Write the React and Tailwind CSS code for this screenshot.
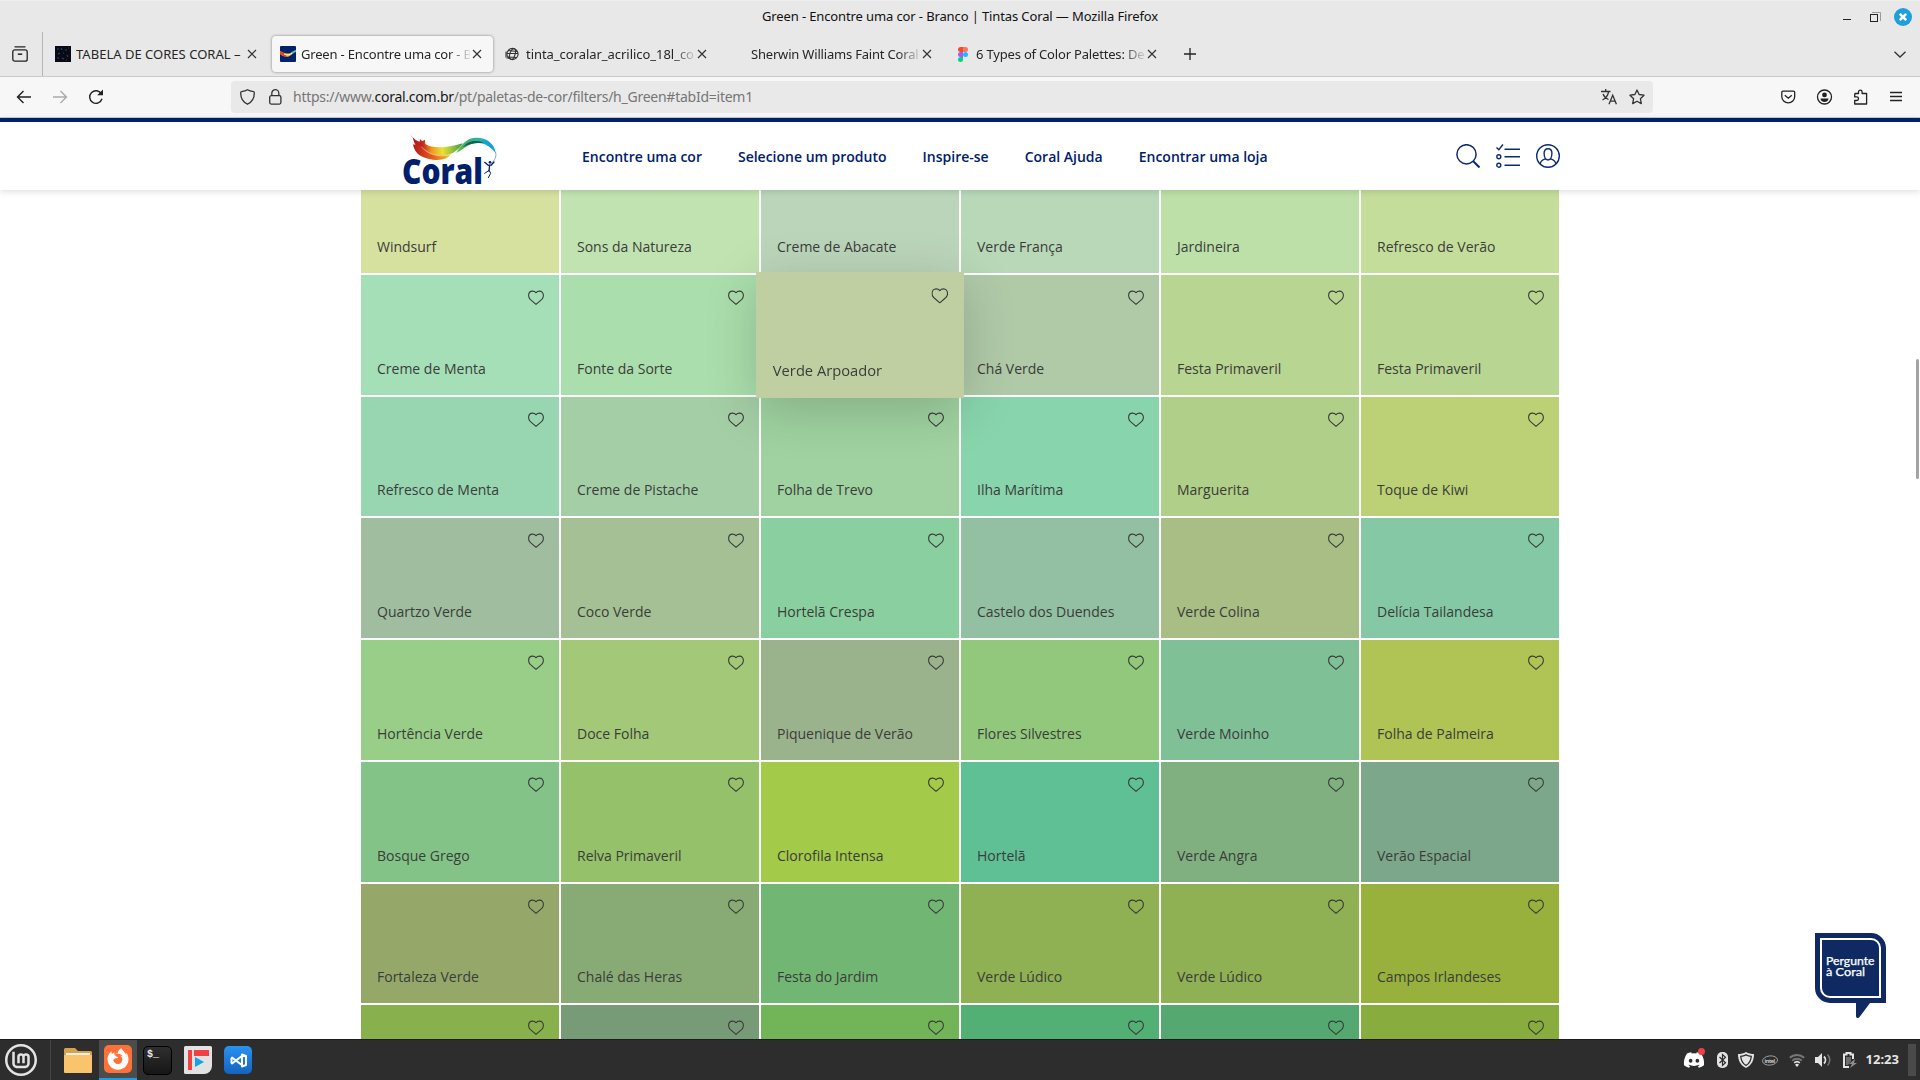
import React from "react";
import { FaFirefoxBrowser, FaDiscord } from "react-icons/fa";
import { SiLinuxmint } from "react-icons/si";

const ui = "font-['Noto_Sans',sans-serif]";

const swatches = [
  ["Windsurf", "#d6e09f"], ["Sons da Natureza", "#c1e2b1"], ["Creme de Abacate", "#bbd5ba"], ["Verde França", "#b8d8b8"], ["Jardineira", "#bce0a8"], ["Refresco de Verão", "#c5dd9b"],
  ["Creme de Menta", "#a5dfb7"], ["Fonte da Sorte", "#aadeac"], ["Verde Arpoador", "#bfcfa2", true], ["Chá Verde", "#b0caa8"], ["Festa Primaveril", "#b8d592"], ["Festa Primaveril", "#b8d592"],
  ["Refresco de Menta", "#97d6b1"], ["Creme de Pistache", "#a4cea6"], ["Folha de Trevo", "#9fd2a0"], ["Ilha Marítima", "#88d4ad"], ["Marguerita", "#b0cf88"], ["Toque de Kiwi", "#bcd175"],
  ["Quartzo Verde", "#a0bda0"], ["Coco Verde", "#a4c094"], ["Hortelã Crespa", "#8acf9f"], ["Castelo dos Duendes", "#93bfa2"], ["Verde Colina", "#a8be84"], ["Delícia Tailandesa", "#84c8a5"],
  ["Hortência Verde", "#98ce88"], ["Doce Folha", "#a3c878"], ["Piquenique de Verão", "#9bb38c"], ["Flores Silvestres", "#92c87c"], ["Verde Moinho", "#80c096"], ["Folha de Palmeira", "#b0c355"],
  ["Bosque Grego", "#84c388"], ["Relva Primaveril", "#95c16a"], ["Clorofila Intensa", "#a3ca48"], ["Hortelã", "#5fc096"], ["Verde Angra", "#80b080"], ["Verão Espacial", "#7ca78a"],
  ["Fortaleza Verde", "#95a869"], ["Chalé das Heras", "#88ab75"], ["Festa do Jardim", "#72b673"], ["Verde Lúdico", "#8fb053"], ["Verde Lúdico", "#8fb053"], ["Campos Irlandeses", "#98b03c"],
  ["", "#88b14e"], ["", "#779b76"], ["", "#72b559"], ["", "#52b074"], ["", "#54a870"], ["", "#88ad3e"],
];

const Heart = () => (
  <svg className="h-[15px] w-4" viewBox="0 -0.4 16 15" fill="none" stroke="#3a3d3a" strokeWidth="1.1" strokeLinejoin="round">
    <path d="M8 14 2.200 8.900C.9 7.600.6 6.400.6 5.200.6 2.600 2.300.700 4.500.700 6 .7 7.300 1.300 8 2.300 8.700 1.300 10 .7 11.500.7c2.200 0 3.900 1.900 3.900 4.500 0 1.200-.3 2.400-1.600 3.700Z" />
  </svg>
);

function Swatch({ name, color, raised, first }) {
  return (
    <div
      className={
        "flex min-h-0 flex-col justify-between pr-[15px] pb-4 pl-4 pt-[15px] " +
        (raised ? "relative z-10 scale-105 shadow-[0_10px_50px_rgba(0,0,0,0.18)]" : "")
      }
      style={{ backgroundColor: color }}
    >
      <div className="flex justify-end">{first ? null : <Heart />}</div>
      {name && (
        <p className="font-['Open_Sans',sans-serif] text-[14px] leading-[21px] whitespace-nowrap text-[#3a3d3a]">{name}</p>
      )}
    </div>
  );
}

const CloseX = () => (
  <svg className="size-[10px] shrink-0" viewBox="0 0 10 10" stroke="#333" strokeWidth="1.2" fill="none">
    <path d="M1 1l8 8M9 1 1 9" />
  </svg>
);

const TabelaIcon = () => (
  <svg className="size-4 shrink-0" viewBox="0 0 16 16">
    <rect width="16" height="16" fill="#080b14" />
    <path d="M2 3h2M6 2l1 2M10 4h2M3 8l2-1M8 7h1M12 9l1 2M2 12h2M7 12l2 1M11 14h1M13 2h1" stroke="#27466e" strokeWidth="1.1" />
  </svg>
);

const CoralIcon = () => (
  <svg className="size-4 shrink-0" viewBox="0 0 16 16">
    <rect width="16" height="16" rx="1" fill="#00246b" />
    <path d="M0 5C2 6 5 7.800 8 7.600c3-.2 5-2.600 8-3.400v1.600c-3 1-5 4.200-8 5C5 11 2 9.500 0 8Z" fill="#f6b81e" />
    <path d="M0 5 4 7l3 3.800C4 10.800 1 9.500 0 8Z" fill="#e8481f" />
    <path d="M11 6.400c2-1.300 3.500-2 5-2.200v1.600c-1.500.3-3 1.300-4.500 2.700Z" fill="#58b7c9" />
    <path d="M4 8c3 1.500 6 1 8-.8" stroke="#fff4ba" fill="none" />
  </svg>
);

const GlobeIcon = () => (
  <svg className="h-[14px] w-4 shrink-0" viewBox="0 0 16 14" fill="none" stroke="#333" strokeWidth="1.1">
    <circle cx="7.500" cy="7" r="5.600" />
    <ellipse cx="7.500" cy="7" rx="2.600" ry="5.600" transform="rotate(18 7.500 7)" />
    <path d="M2 6.500h11M3 3.500l9 1M2.800 10l9 .5M1 4.500v6M1.500 11h3" />
  </svg>
);

const FigmaIcon = () => (
  <svg className="h-[15px] w-4 shrink-0" viewBox="0 0 16 15">
    <path d="M8 0H5.500a2.500 2.500 0 0 0 0 5H8Z" fill="#f24e1e" />
    <path d="M8 0h2.500a2.500 2.500 0 0 1 0 5H8Z" fill="#ff7262" />
    <path d="M8 5H5.500a2.500 2.500 0 0 0 0 5H8Z" fill="#a259ff" />
    <circle cx="10.500" cy="7.500" r="2.500" fill="#1abcfe" />
    <path d="M8 10H5.500A2.500 2.500 0 1 0 8 12.500Z" fill="#0acf83" />
  </svg>
);

function Tab({ icon, title, active, fade = true, track }) {
  return (
    <div
      className={
        "flex h-9 w-[221px] shrink-0 items-center rounded pl-2 pr-[11px] " +
        (active ? "bg-[#f7f7f7] shadow-[0_0_3px_rgba(0,0,0,0.45)]" : "")
      }
    >
      {icon}
      <div
        className={
          "ml-[5px] min-w-0 flex-1 overflow-hidden text-[13px] leading-5 whitespace-nowrap text-[#262626] " + track + " " +
          (fade ? "[mask-image:linear-gradient(to_right,#000_calc(100%-22px),rgba(0,0,0,0.1))]" : "")
        }
      >
        {title}
      </div>
      <div className="ml-[2px] flex">
        <CloseX />
      </div>
    </div>
  );
}

function BrowserChrome() {
  return (
    <div className={"flex h-[118px] shrink-0 flex-col bg-[#e8e8e8] " + ui}>
      <div className="grid h-8 grid-cols-[1fr_auto_1fr] items-center border-t border-[#efefef]">
        <span />
        <span className="text-[13px] tracking-[-0.12px] text-[#111]">Green - Encontre uma cor - Branco | Tintas Coral — Mozilla Firefox</span>
        <div className="flex items-center justify-end pr-2">
          <svg className="h-[18px] w-[70px]" viewBox="0 0 70 18">
            <path d="M1 11.500h8" stroke="#222" />
            <path d="M30 4.500h8.500V13" stroke="#999" fill="none" />
            <rect x="28.500" y="6.500" width="7" height="7" stroke="#222" fill="none" />
            <circle cx="61" cy="9" r="9" fill="#1f9ede" />
            <path d="m57.800 5.800 6.400 6.400m0-6.400-6.400 6.400" stroke="#fff" strokeWidth="2.500" />
          </svg>
        </div>
      </div>
      <div className="flex h-11 items-center">
        <div className="flex h-full w-[43px] items-center border-r border-[#b5b5b5] pl-3">
          <svg className="size-4" viewBox="0 0 16 16" fill="none" stroke="#222" strokeWidth="1.300">
            <path d="M3 .8h10" strokeLinecap="round" />
            <rect x=".8" y="3.800" width="14.400" height="11.400" rx="2" />
            <path d="M5.800 8.200h4.400" strokeWidth="1.500" />
          </svg>
        </div>
        <div className="ml-1 flex gap-1">
          <Tab icon={<TabelaIcon />} title="TABELA DE CORES CORAL –" fade={false} track="tracking-[0.02px]" />
          <Tab active icon={<CoralIcon />} title="Green - Encontre uma cor - B" track="tracking-[-0.18px]" />
          <Tab icon={<GlobeIcon />} title="tinta_coralar_acrilico_18l_co" track="tracking-[-0.04px]" />
          <Tab icon={<span className="w-4 shrink-0" />} title="Sherwin Williams Faint Coral" track="tracking-[-0.19px]" />
          <Tab icon={<FigmaIcon />} title="6 Types of Color Palettes: De" track="tracking-[-0.18px]" />
        </div>
        <svg className="ml-4 size-3" viewBox="0 0 12 12" stroke="#222" strokeWidth="1.300">
          <path d="M6 0v12M0 6h12" />
        </svg>
        <svg className="mr-[14px] ml-auto h-[7px] w-3" viewBox="0 0 12 7" stroke="#333" strokeWidth="1.300" fill="none">
          <path d="m.5.800 5.500 5.200L11.500.800" />
        </svg>
      </div>
      <div className="flex h-[42px] items-center border-y border-[#c8c8c8] bg-[#f7f7f7] text-[#222]">
        <svg className="ml-4 h-4 w-[90px]" viewBox="0 0 90 16" fill="none" stroke="#222" strokeWidth="1.400">
          <path d="M15 8H1.500M7.500 2 1.500 8l6 6" />
          <path d="M37 8h13.500M44.500 2l6 6-6 6" stroke="#aaa" />
          <path d="M85.500 5A6.300 6.300 0 1 0 86 9.800" />
          <path d="M87 .5v5.800h-5.800Z" fill="#222" stroke="none" />
        </svg>
        <div className="ml-[125px] flex h-8 w-[1422px] items-center rounded bg-[#e9e9e9] pr-2 pl-[9px]">
          <svg className="h-4 w-[42px]" viewBox="0 0 42 16" fill="none" stroke="#333" strokeWidth="1.300">
            <path d="M7.500.8c2 1.200 4 1.600 6 1.900.8.1.8.6.8 1.300 0 5-2 9-6.800 11.200C2.700 13 .7 9 .7 4c0-.7 0-1.200.8-1.300 2-.3 4-.7 6-1.900Z" />
            <rect x="29.700" y="6.700" width="11.200" height="8.400" rx="1.500" />
            <path d="M31.800 6.500V4.200a3.500 3.500 0 0 1 7 0v2.300" />
          </svg>
          <span className="ml-[11px] pb-[2px] text-[14px] tracking-[-0.25px] text-[#767676]">
            https://www.<span className="text-[#161616]">coral.com.br</span>/pt/paletas-de-cor/filters/h_Green#tabId=item1
          </span>
          <svg className="ml-auto h-4 w-11" viewBox="0 0 44 16" fill="none" stroke="#333" strokeWidth="1.300">
            <path d="M0 2.500h9.500M4.700 0v2.500M1.500 11C4.500 9.500 7 6.500 7.600 2.700M2 5c1 2.500 3 4.500 5.500 5.500M8 15.200l3.700-9 3.700 9M9.200 12.200h5" />
            <path d="m36 1 2.100 4.500 4.900.7-3.600 3.500.9 4.900-4.300-2.400-4.300 2.400.9-4.900L29 6.200l4.900-.7Z" strokeLinejoin="round" />
          </svg>
        </div>
        <svg className="ml-[128px] h-4 w-[122px]" viewBox="0 0 122 16" fill="none" stroke="#222" strokeWidth="1.300">
          <path d="M2 2.200h10.500a1.200 1.200 0 0 1 1.200 1.200V7.500a6.400 6.400 0 0 1-12.900 0V3.400A1.200 1.200 0 0 1 2 2.200ZM3.800 6.200l3.500 3 3.500-3" />
          <circle cx="43.500" cy="8" r="7" />
          <circle cx="43.500" cy="5.900" r="2.400" fill="#222" stroke="none" />
          <path d="M39.500 9.500h8c0 2-1.800 3.500-4 3.500s-4-1.500-4-3.500Z" fill="#222" stroke="none" />
          <path d="M74 4.500h3.500V3a1.800 1.800 0 0 1 3.600 0v1.500h4.500V15H73.700v-3.500h2a1.800 1.800 0 0 0 0-3.600h-2V6Z" strokeLinejoin="round" />
          <path d="M109 3.500h12M109 7.500h12M109 11.500h12" />
        </svg>
      </div>
    </div>
  );
}

const CoralLogo = () => (
  <svg className="h-[54px] w-[98px]" viewBox="0 0 294 162">
    <defs>
      <linearGradient id="warm" x1="0" x2="1">
        <stop offset="0" stopColor="#a8151c" />
        <stop offset=".25" stopColor="#c3281b" />
        <stop offset=".42" stopColor="#ee9a1e" />
        <stop offset=".62" stopColor="#ecdf35" />
        <stop offset=".82" stopColor="#8fc13f" />
        <stop offset="1" stopColor="#3a9a48" />
      </linearGradient>
      <linearGradient id="cool" x1="0" x2="1">
        <stop offset="0" stopColor="#6fb544" />
        <stop offset=".3" stopColor="#3fae6a" />
        <stop offset=".6" stopColor="#25b5b0" />
        <stop offset="1" stopColor="#0a8fd8" />
      </linearGradient>
      <linearGradient id="under" x1="0" x2="1">
        <stop offset="0" stopColor="#b5161c" />
        <stop offset=".55" stopColor="#e8641c" />
        <stop offset="1" stopColor="#f5c826" />
      </linearGradient>
    </defs>
    <path d="M25 5l10 8 9 8 11 5 4-8 4 7 9-5 1 13c20 13 60 14 112-2-10 20-40 42-76 42-38-1-64-25-71-50l-4-12Z" fill="url(#warm)" />
    <path d="M36 34c5 30 28 42 60 46 26 3 46-3 54-17-40 10-72 0-92-24Z" fill="url(#under)" />
    <path d="M164 60c14-14 22-38 52-45 30-5 62 8 68 46-14-20-34-34-62-30-24 3-34 20-58 29Z" fill="url(#cool)" />
    <path d="M186 42c10-12 24-20 42-18 10 1 16 3 22 7-24-3-42 0-64 11Z" fill="#0b5f55" />
    <path d="M250 22c18 6 30 18 34 39-7-12-16-20-28-25Z" fill="#12a3dc" />
    <path d="M284 58c3 13-3 25-14 34" fill="none" stroke="#5b7ea8" strokeWidth="2" />
    <path d="M62 42c28 30 68 34 108 14" fill="none" stroke="#fff" strokeWidth="2" opacity=".75" />
    <text x="3" y="152" textLength="243" lengthAdjust="spacingAndGlyphs" fontFamily="Open Sans, sans-serif" fontWeight="800" fontSize="104" fill="#00206b">Coral</text>
    <circle cx="267" cy="88" r="4" fill="#00206b" />
    <path d="M251 88l11 9 9-1 8-9M266 96l-2 18" fill="none" stroke="#00206b" strokeWidth="4" strokeLinecap="round" strokeLinejoin="round" />
    <path d="M263 113l-12 8M265 113l4 8-7 13" fill="none" stroke="#00206b" strokeWidth="3" strokeLinecap="round" strokeLinejoin="round" />
  </svg>
);

function SiteHeader() {
  return (
    <header className="relative z-20 flex h-[72px] shrink-0 items-center border-t-4 border-[#00206b] bg-white shadow-[0_2px_6px_rgba(0,0,0,0.12)]">
      <div className="mx-auto flex w-[1200px] items-center">
        <div className="mt-2 ml-[41px]">
          <CoralLogo />
        </div>
        <nav className="ml-[83px] flex gap-9 font-['Open_Sans',sans-serif] text-[14px] font-semibold text-[#00206b]">
          <a>Encontre uma cor</a>
          <a>Selecione um produto</a>
          <a>Inspire-se</a>
          <a>Coral Ajuda</a>
          <a>Encontrar uma loja</a>
        </nav>
        <div className="ml-auto flex gap-4">
          <svg className="size-6" viewBox="0 0 24 24" fill="none" stroke="#0c2a72" strokeWidth="1.500">
            <circle cx="10.500" cy="10.300" r="9.600" />
            <path d="m17 17 6.500 6.500" strokeWidth="2" />
          </svg>
          <svg className="size-6" viewBox="0 0 24 24" fill="none" stroke="#0c2a72" strokeWidth="1.400">
            <path d="m.5 3.500 2.300 2.300L7 .5" />
            <path d="M8.500 5.200H24M8.500 12.800H24M8.500 21.200H24" />
            <circle cx="2.800" cy="12.800" r="2" />
            <circle cx="2.800" cy="21.200" r="2" />
          </svg>
          <svg className="size-6" viewBox="0 0 24 24" fill="none" stroke="#0c2a72" strokeWidth="1.400">
            <circle cx="12" cy="12" r="11.300" />
            <path d="M12 4.800c2.500 0 3.900 1.700 3.900 4.300 0 3-1.200 6.900-3.900 6.900s-3.900-3.900-3.900-6.900c0-2.600 1.400-4.300 3.900-4.300ZM9.500 14.800c-2.500.9-5 1.200-5.200 5.200M14.500 14.800c2.500.9 5 1.200 5.200 5.200" />
          </svg>
        </div>
      </div>
    </header>
  );
}

const ChatBubble = () => (
  <svg className="absolute top-[742px] right-[34px] h-[86px] w-[71px]" viewBox="0 0 71 86">
    <path d="M0 1h56a15 15 0 0 1 15 15v55H55L44.500 85c-1 1.500-3.500 1.500-3.500-1V71H15A15 15 0 0 1 0 56Z" fill="#0f2a63" />
    <path d="M6 7h50a9 9 0 0 1 9 9v49H15a9 9 0 0 1-9-9Z" fill="none" stroke="#fff" strokeWidth="2" />
    <g fill="#fff" stroke="#fff" strokeWidth=".25" fontFamily="Lato, sans-serif" fontSize="10.500">
      <text x="11" y="32.500" textLength="48.500" lengthAdjust="spacingAndGlyphs">Pergunte</text>
      <text x="11" y="44" textLength="39" lengthAdjust="spacingAndGlyphs">à Coral</text>
    </g>
  </svg>
);

function Taskbar() {
  return (
    <footer className="flex h-[41px] shrink-0 items-center border-t border-[#1c1c1c] bg-[#2d2d2d]">
      <div className="flex h-10 w-[51px] items-center border-r border-[#444] pl-[5px]">
        <SiLinuxmint className="size-8 text-[#e4e4e4]" />
      </div>
      <svg className="ml-[13px] h-[25px] w-7" viewBox="0 0 28 25">
        <path d="M0 1.500A1.500 1.500 0 0 1 1.500 0H11l3 3h12.500A1.500 1.500 0 0 1 28 4.500V12H0Z" fill="#d9a24a" />
        <rect x="2" y="5" width="24" height="4" fill="#f0f0f0" />
        <rect y="7" width="28" height="18" rx="1" fill="#f9c46b" />
      </svg>
      <div className="ml-[7px] flex h-full w-[38px] items-center justify-center border-b-2 border-[#1f9ede] bg-[#4c4c4c]">
        <div className="flex size-7 items-center justify-center rounded-[5px] bg-[#ff7139]">
          <FaFirefoxBrowser className="size-[22px] text-white" />
        </div>
      </div>
      <div className="ml-[6px] flex size-[29px] rounded-[5px] border border-black bg-gradient-to-b from-[#2f2f2f] to-[#161616] pl-[3px] pt-[1px]">
        <span className="font-['Liberation_Mono',monospace] text-[10px] font-bold leading-[13px] text-[#eee]">$_</span>
      </div>
      <svg className="ml-3 size-7" viewBox="0 0 28 28">
        <path d="M1.500 0h25A1.500 1.500 0 0 1 28 1.500V20a8 8 0 0 1-8 8H1.500A1.500 1.500 0 0 1 0 26.500v-25A1.500 1.500 0 0 1 1.500 0Z" fill="#e2e2e2" />
        <path d="M4 4h4v20H4ZM10 4h15v6H10Z" fill="#f04242" />
        <path d="m11 11 9 5-9 5Z" fill="#12a5df" />
      </svg>
      <div className="ml-3 flex size-7 items-center justify-center rounded-[5px] bg-gradient-to-b from-[#2a92ef] to-[#1464c0]">
        <svg className="h-[15px] w-[17px]" viewBox="0 0 17 15" fill="none" stroke="#fff" strokeWidth="2" strokeLinejoin="round">
          <path d="M12.500 2.500 2 10.500M2 4.500l10.500 8" strokeLinecap="round" />
          <path d="M1.500 5v5.500M12 1.500l4 1.500v9l-4 1.500Z" />
        </svg>
      </div>
      <div className="ml-auto flex items-center text-[#e4e4e4]">
        <div className="relative mr-3">
          <FaDiscord className="size-[22px] text-white" />
          <span className="absolute -top-px right-0 size-[7px] rounded-full bg-[#f23f43]" />
        </div>
        <svg className="mr-[10px] h-4 w-[11px]" viewBox="0 0 11 16">
          <rect width="11" height="16" rx="5" fill="#e4e4e4" />
          <path d="m2.500 5 6 5.800-3 2.700v-11l3 2.700-6 5.800" fill="none" stroke="#2d2d2d" strokeWidth="1.200" />
        </svg>
        <svg className="mr-2 size-4" viewBox="0 0 16 16">
          <path d="M8 0c2.500 1.500 5 2 8 2 0 6-2 11-8 14C2 13 0 8 0 2c3 0 5.500-.5 8-2Z" fill="#e4e4e4" />
          <path d="M8 2.800c2 1 3.500 1.300 5.300 1.500C13 8.500 11.500 11.500 8 13.500 4.500 11.500 3 8.500 2.700 4.300 4.500 4.100 6 3.800 8 2.800Z" fill="none" stroke="#2d2d2d" strokeWidth="1.300" />
        </svg>
        <svg className="mr-[11px] h-[11px] w-4" viewBox="0 0 16 11">
          <ellipse cx="8" cy="5.500" rx="7.500" ry="4.600" fill="none" stroke="#a8a8a8" strokeWidth=".9" transform="rotate(-6 8 5.500)" />
          <text x="2.600" y="7.500" fontFamily="Open Sans, sans-serif" fontWeight="600" fontSize="5.500" textLength="10.500" fill="#e4e4e4">intel</text>
        </svg>
        <svg className="mr-[10px] h-[14px] w-4" viewBox="0 0 16 14" fill="none">
          <path d="M.8 4.800a10.500 10.500 0 0 1 14.400 0M3.200 7.600a7 7 0 0 1 9.600 0" stroke="#777" strokeWidth="1.900" />
          <path d="M5.200 9.800a4.200 4.200 0 0 1 5.600 0" stroke="#e4e4e4" strokeWidth="1.700" />
          <path d="m8 14-2-2.300a3 3 0 0 1 4 0Z" fill="#e4e4e4" />
        </svg>
        <svg className="mr-3 h-[14px] w-4" viewBox="0 0 16 14" fill="none">
          <path d="M0 4h3l4-4v14l-4-4H0Z" fill="#e4e4e4" />
          <path d="M9 3.500a5 5 0 0 1 0 7" stroke="#e4e4e4" strokeWidth="1.800" />
          <path d="M12.500 1.500c3 3 3 8 0 11" stroke="#777" strokeWidth="1.500" />
        </svg>
        <svg className="mr-[9px] h-4 w-[14px]" viewBox="0 0 14 16" fill="none">
          <path d="M6 15H1V2.500h2.500V1h4v1.500H10V7" stroke="#e4e4e4" strokeWidth="2" />
          <path d="M3 5h5v4l-3 4H3Z" fill="#e4e4e4" opacity=".35" />
          <path d="m12 7-6 5h3l-2 4 7-5h-3Z" fill="#8d8d8d" />
        </svg>
        <span className={"text-[13px] font-bold text-[#e4e4e4] " + ui}>12:23</span>
        <span className="mr-1 ml-[9px] h-8 w-2 bg-[#4a4a4a]" />
      </div>
    </footer>
  );
}

export default function App() {
  return (
    <div className="flex h-[1080px] w-[1920px] flex-col overflow-hidden bg-white">
      <BrowserChrome />
      <SiteHeader />
      <main className="relative h-[849px] shrink-0 overflow-hidden">
        <div className="mx-auto grid w-[1198px] grid-cols-6 grid-rows-[83px_120px_119px_120px_120px_120px_119px_120px] gap-0.5">
          {swatches.map(([name, color, raised], i) => (
            <Swatch key={i} name={name} color={color} raised={raised} first={i < 6} />
          ))}
        </div>
        <ChatBubble />
        <div className="absolute top-[169px] right-px h-[120px] w-[3px] rounded-full bg-[#a3a3a3]" />
      </main>
      <Taskbar />
    </div>
  );
}
